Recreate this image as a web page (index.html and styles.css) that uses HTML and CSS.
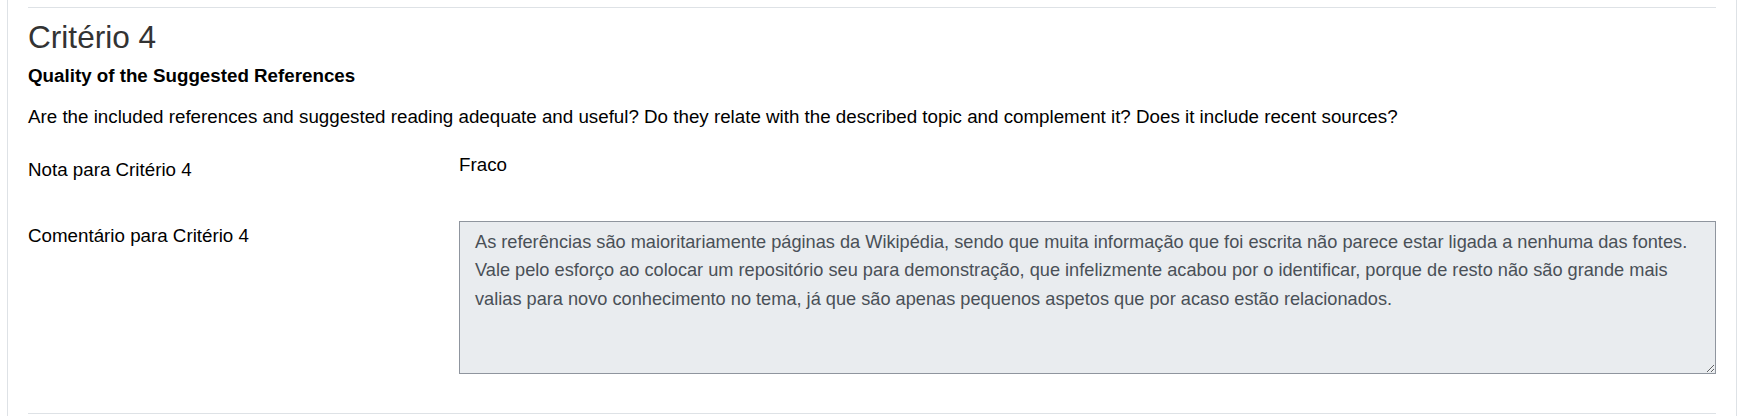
FILE: index.html
```html
<!DOCTYPE html>
<html lang="pt">
<head>
<meta charset="utf-8">
<title>Critério 4</title>
<link rel="stylesheet" href="styles.css">
</head>
<body>
<div class="panel">
  <hr class="rule rule-top">
  <h3 class="crit-title">Critério 4</h3>
  <div class="crit-name">Quality of the Suggested References</div>
  <p class="crit-desc">Are the included references and suggested reading adequate and useful? Do they relate with the described topic and complement it? Does it include recent sources?</p>
  <div class="form-row row-grade">
    <div class="form-label label-grade">Nota para Critério 4</div>
    <div class="form-field"><span class="static">Fraco</span></div>
  </div>
  <div class="form-row row-comment">
    <div class="form-label label-comment">Comentário para Critério 4</div>
    <div class="form-field">
      <textarea class="comment" readonly>As referências são maioritariamente páginas da Wikipédia, sendo que muita informação que foi escrita não parece estar ligada a nenhuma das fontes.
Vale pelo esforço ao colocar um repositório seu para demonstração, que infelizmente acabou por o identificar, porque de resto não são grande mais
valias para novo conhecimento no tema, já que são apenas pequenos aspetos que por acaso estão relacionados.</textarea>
    </div>
  </div>
  <hr class="rule rule-bottom">
</div>
</body>
</html>
```
FILE: styles.css
```css
html, body {
  margin: 0;
  padding: 0;
  background: #ffffff;
}

body {
  font-family: "Liberation Sans", Arial, sans-serif;
  font-size: 18.75px;
  line-height: 28.125px;
  color: #1d2125;
}

.panel {
  box-sizing: border-box;
  margin-left: 7px;
  width: 1730px;
  min-height: 416px;
  padding: 7px 20px 0 20px;
  border-left: 1px solid #dee2e6;
  border-right: 1px solid #dee2e6;
}

.rule {
  margin: 0;
  border: 0;
  border-top: 1px solid #dee2e6;
  height: 0;
}

.crit-title {
  margin: 10.5px 0 0 0;
  font-size: 31.6px;
  line-height: 37.5px;
  font-weight: 400;
  color: #333333;
}

.crit-name {
  margin-top: 5.9px;
  font-weight: 700;
  color: #000000;
}

.crit-desc {
  margin: 12.5px 0 0 0;
  color: #000000;
}

.form-row {
  display: grid;
  grid-template-columns: 431px 1fr;
}

.row-grade {
  margin-top: 20.3px;
}

.row-comment {
  margin-top: 36.8px;
}

.form-label {
  color: #000000;
}

.label-grade {
  padding-top: 5px;
}

.label-comment {
  padding-top: 1.1px;
}

.static {
  color: #000000;
}

.comment {
  display: block;
  box-sizing: border-box;
  width: 100%;
  height: 153px;
  margin: 0;
  padding: 6.5px 15px;
  font-family: inherit;
  font-size: 18.2px;
  line-height: 28.125px;
  color: #495057;
  background: #e9ecef;
  border: 1px solid #8f959e;
  border-radius: 0;
  resize: vertical;
  overflow: hidden;
}

.rule-bottom {
  margin-top: 39px;
}
```
